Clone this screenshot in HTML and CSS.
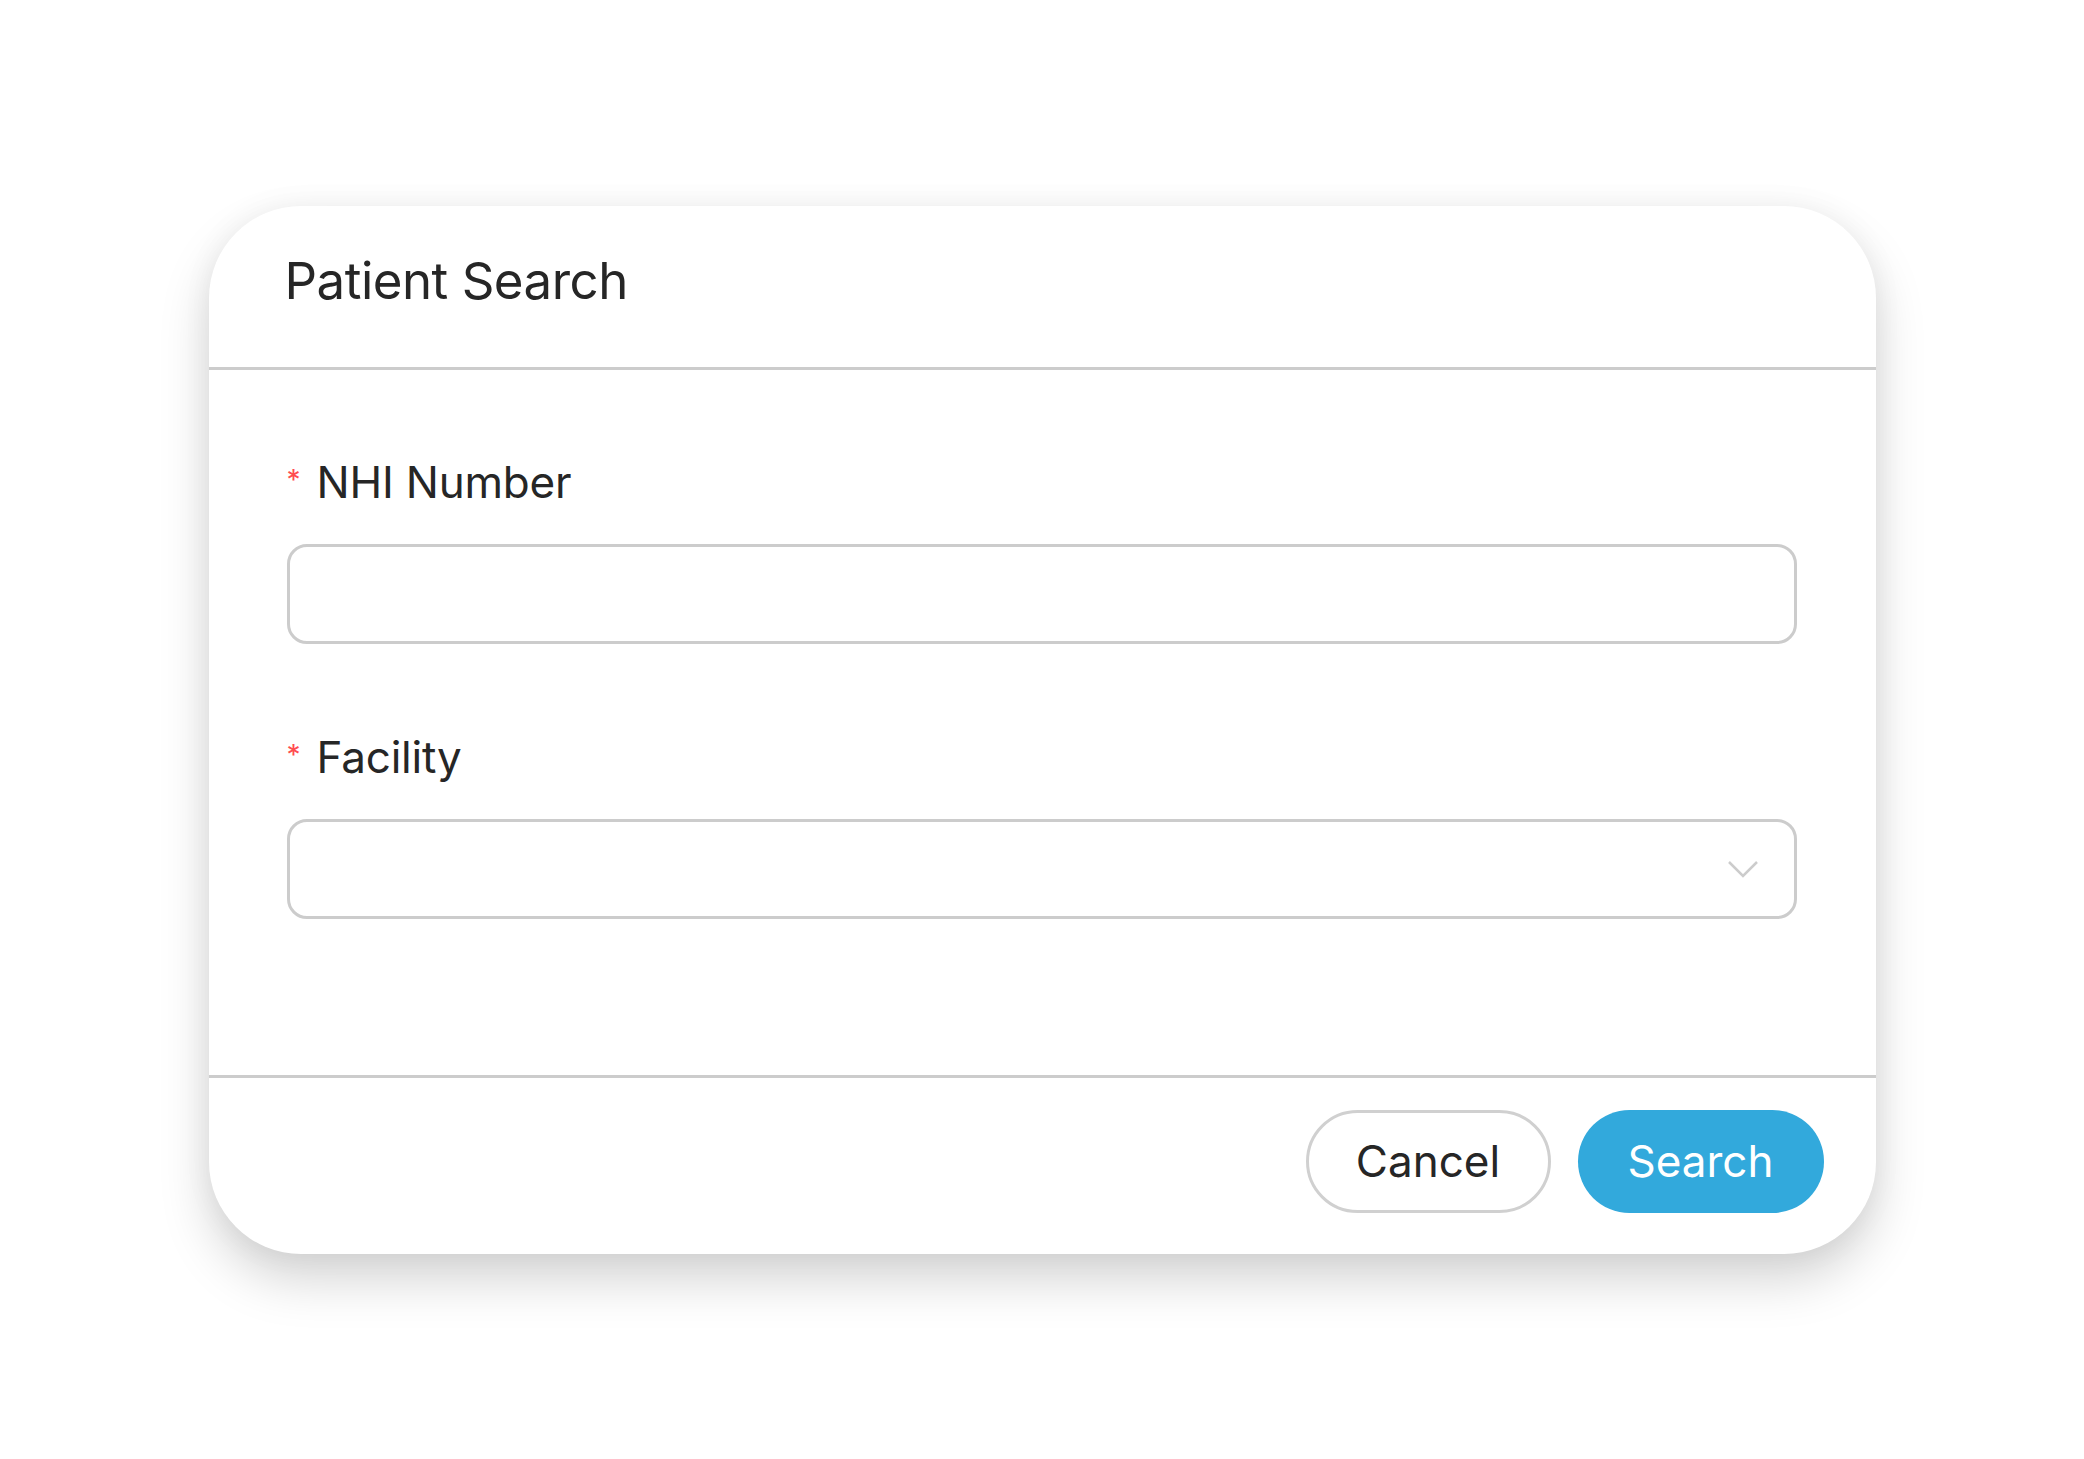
FILE: index.html
```html
<!DOCTYPE html>
<html lang="en">
<head>
    <meta charset="UTF-8">
    <meta name="viewport" content="width=device-width, initial-scale=1.0">
    <title>Patient Search</title>
    <link rel="stylesheet" href="styles.css">
</head>
<body>
    <div class="modal">
        <div class="modal-header">
            <h1>Patient Search</h1>
        </div>
        <form class="modal-body" id="search-form">
            <div class="field">
                <label for="nhi-input"><span class="required">*</span>NHI Number</label>
                <input type="text" id="nhi-input" name="nhi">
            </div>
            <div class="field">
                <label for="facility-select"><span class="required">*</span>Facility</label>
                <div class="select">
                    <select id="facility-select" name="facility"></select>
                    <svg class="chevron" width="32" height="24" viewBox="0 0 32 24">
                        <path d="M2 6 L16 20 L30 6" fill="none" stroke="#cccccc" stroke-width="2.5"/>
                    </svg>
                </div>
            </div>
        </form>
        <div class="modal-footer">
            <button type="button" class="btn btn-cancel">Cancel</button>
            <button type="submit" form="search-form" class="btn btn-primary">Search</button>
        </div>
    </div>
</body>
</html>
```

FILE: styles.css
```css
body {
    font-family: Inter, "Liberation Sans", Arial, sans-serif;
    background-color: #fff;
    margin: 0;
    padding: 0;
    display: flex;
    align-items: center;
    justify-content: center;
    height: 100vh;
    color: #2b2b2b;
}
.modal {
    width: 1667px;
    background-color: #fff;
    border-radius: 92px;
    box-shadow: 0 26px 50px rgba(0, 0, 0, 0.17), 0 0 30px rgba(0, 0, 0, 0.05);
    overflow: hidden;
}
.modal-header {
    padding: 40px 76px 51px;
    border-bottom: 3px solid #cccccc;
}
.modal-header h1 {
    margin: 0;
    font-size: 51px;
    line-height: 70px;
    font-weight: 400;
    letter-spacing: -0.5px;
    color: #262626;
}
.modal-body {
    padding: 82px 79px 156px 78px;
    display: flex;
    flex-direction: column;
    gap: 83px;
}
.field {
    display: flex;
    flex-direction: column;
    gap: 32px;
}
.field label {
    font-size: 44px;
    line-height: 60px;
    letter-spacing: -0.2px;
    color: #262626;
    display: flex;
    align-items: flex-start;
}
.required {
    color: #ff4d4f;
    font-size: 28px;
    line-height: 40px;
    width: 30px;
    margin-top: 8px;
}
input[type="text"], select {
    box-sizing: border-box;
    width: 100%;
    height: 100px;
    border: 3px solid #cccccc;
    border-radius: 20px;
    background: #fff;
    font-size: 40px;
    padding: 0 30px;
    margin: 0;
    outline: none;
    appearance: none;
    -webkit-appearance: none;
}
.select {
    position: relative;
}
.chevron {
    position: absolute;
    right: 38px;
    top: 37px;
}
.modal-footer {
    border-top: 3px solid #cccccc;
    padding: 32px 52px 41px;
    display: flex;
    justify-content: flex-end;
    gap: 27px;
}
.btn {
    height: 103px;
    border-radius: 52px;
    font-family: inherit;
    font-size: 44px;
    padding: 0;
    cursor: pointer;
}
.btn-cancel {
    width: 245px;
    background-color: #fff;
    border: 3px solid #d0d0d0;
    color: #262626;
}
.btn-primary {
    width: 246px;
    background-color: #32a9dc;
    border: none;
    color: #fff;
}
```
